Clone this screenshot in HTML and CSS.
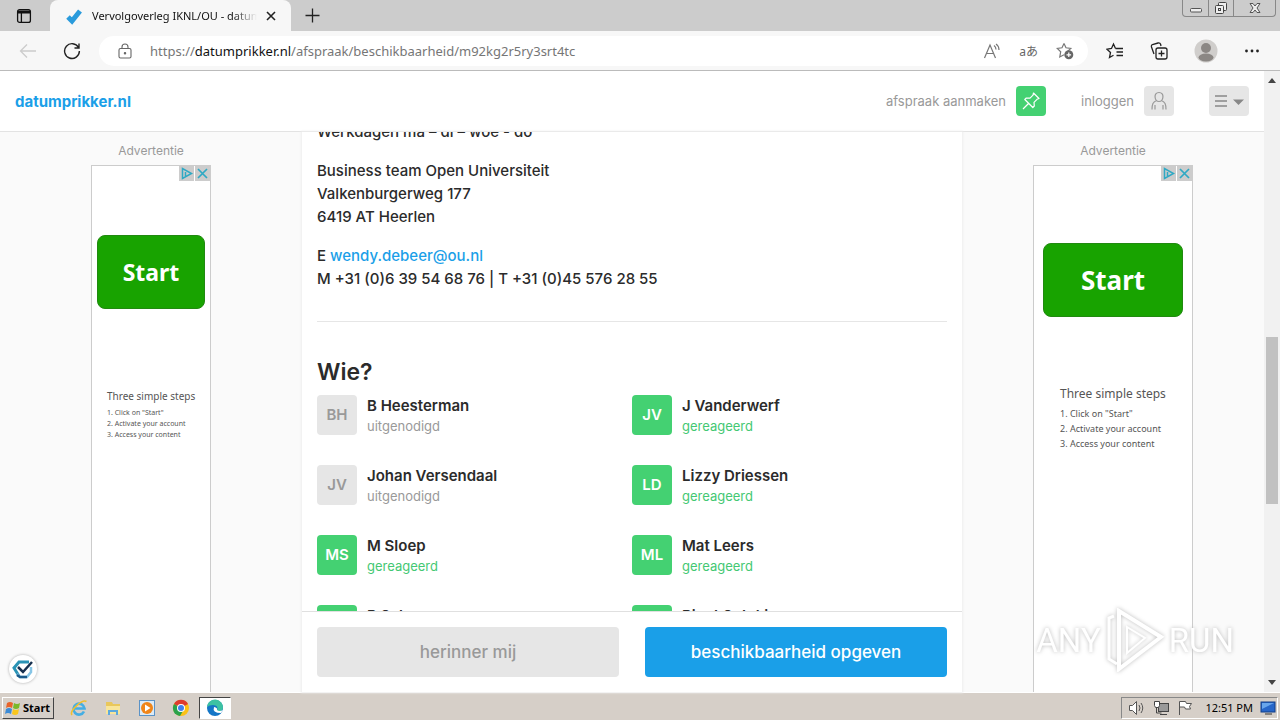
FILE: index.html
```
<!DOCTYPE html>
<html lang="nl">
    <head>
        <meta charset="utf-8">
        <title>Vervolgoverleg IKNL/OU - datumprikker.nl</title>
        <link rel="stylesheet" href="styles.css">
    </head>
    <body>
        <div class="tab-bar">
            <button class="tab-actions" aria-label="Tab actions">
                <svg width="16" height="16" viewBox="0 0 16 16" fill="none" stroke="#111" stroke-width="1.3"><rect x="1.6" y="1.6" width="12.8" height="12.8" rx="2"/><path d="M2 3.4h12M2 4.6h12" stroke-width="1.6"/><path d="M5.4 5v9"/></svg>
            </button>
            <div class="tab">
                <svg width="18" height="18" viewBox="0 0 18 18"><path d="M3 10l4 4L15 4" fill="none" stroke="#2a9bdc" stroke-width="5"/></svg>
                <span class="tab-title">Vervolgoverleg IKNL/OU - datumprikker.nl</span>
                <button class="tab-close" aria-label="Close tab">
                    <svg width="10" height="10" viewBox="0 0 10 10" stroke="#222" stroke-width="1.6"><path d="M1 1l8 8M9 1l-8 8"/></svg>
                </button>
            </div>
            <button class="new-tab" aria-label="New tab">
                <svg width="15" height="15" viewBox="0 0 15 15" stroke="#222" stroke-width="1.3"><path d="M7.5 .5v14M.5 7.5h14"/></svg>
            </button>
            <div class="window-btns">
                <button aria-label="Minimize"><svg width="14" height="14" viewBox="0 0 14 14" fill="#eee" stroke="#555"><rect x="1.5" y="7.5" width="11" height="3.5" rx="1"/></svg></button>
                <button aria-label="Restore"><svg width="14" height="14" viewBox="0 0 14 14" fill="#eee" stroke="#444"><rect x="4.5" y="1.5" width="8" height="8" rx="1"/><rect x="1.5" y="4.5" width="8" height="8" rx="1"/><rect x="4.5" y="7.5" width="2" height="2"/></svg></button>
                <button class="wide" aria-label="Close"><svg width="14" height="14" viewBox="0 0 14 14" fill="#eee" stroke="#555"><path d="M2 2.500h3l2 2.500 2-2.500h3L9 7l3 4.500H9L7 9l-2 2.500H2L5 7z"/></svg></button>
            </div>
        </div>

        <div class="toolbar">
            <button aria-label="Back"><svg width="18" height="16" viewBox="0 0 18 16" fill="none" stroke="#ccc" stroke-width="1.3"><path d="M17 8H2M8 1.500L1.500 8 8 14.500"/></svg></button>
            <button aria-label="Refresh"><svg width="18" height="18" viewBox="0 0 18 18" fill="none" stroke="#222" stroke-width="1.4"><path d="M15.500 5.500A7.400 7.400 0 1 0 16.400 9M16 1.500v4.500h-4.500"/></svg></button>
            <div class="address">
                <svg width="14" height="16" viewBox="0 0 14 16" fill="none" stroke="#666" stroke-width="1.1"><rect x="1" y="5.500" width="12" height="9.500" rx="1.500"/><path d="M4 5.500V4a3 3 0 0 1 6 0v1.500"/><circle cx="7" cy="10.200" r=".7" fill="#666"/></svg>
                <span class="url">https://<b>datumprikker.nl</b>/afspraak/beschikbaarheid/m92kg2r5ry3srt4tc</span>
                <button aria-label="Read aloud"><svg width="18" height="16" viewBox="0 0 18 16" fill="none" stroke="#777" stroke-width="1.200"><path d="M1.500 15L7 2l5.500 13M3.500 10.500h7M11 2.500q2 1.500 2 4M13 1q3 2 3 6"/></svg></button>
                <button class="translate" aria-label="Translate">aあ</button>
                <button aria-label="Add to favorites"><svg width="18" height="18" viewBox="0 0 18 18" fill="none" stroke="#777" stroke-width="1.200"><path d="M8 1.500l2 4.300 4.800.6-3.500 3.200M8 1.500L6 5.800l-4.800.6 3.500 3.300L3.800 15l4.200-2.300"/><circle cx="12.800" cy="12.800" r="4.500" fill="#666" stroke="none"/><path d="M12.800 10.500v4.600M10.500 12.800h4.600" stroke="#fff"/></svg></button>
            </div>
            <button aria-label="Favorites"><svg width="18" height="18" viewBox="0 0 18 18" fill="none" stroke="#222" stroke-width="1.300"><path d="M9.500 6.500L7.500 2 5.500 6.500 1 7.200l3.500 3.200L3.500 15.500l4-2.300M9.500 6.500H17M10.500 10H17M10.500 13.500H17"/></svg></button>
            <button aria-label="Collections"><svg width="18" height="18" viewBox="0 0 18 18" fill="none" stroke="#222" stroke-width="1.300"><rect x="6" y="6" width="11" height="11" rx="2"/><path d="M11.500 8.500v6M8.500 11.500h6M4 12L1.500 5q-.5-2 1-2.500L8 1q2-.4 2.600 1.300L11 4"/></svg></button>
            <button aria-label="Profile"><svg width="24" height="24" viewBox="0 0 24 24"><circle cx="12" cy="12" r="11.500" fill="#d0cecc"/><circle cx="12" cy="9" r="5" fill="#8b8784"/><ellipse cx="12" cy="18.500" rx="7.500" ry="4" fill="#8b8784"/></svg></button>
            <button aria-label="Settings and more"><svg width="16" height="16" viewBox="0 0 16 16" fill="#222"><circle cx="2.500" cy="8" r="1.400"/><circle cx="8" cy="8" r="1.400"/><circle cx="13.500" cy="8" r="1.400"/></svg></button>
        </div>

        <div class="viewport">
            <div class="site">
                <header class="site-header">
                    <a class="logo" href="#">datumprikker.nl</a>
                    <a class="nav-item" href="#">afspraak aanmaken
                        <span class="nav-icon green"><svg width="20" height="20" viewBox="0 0 20 20" fill="none" stroke="#fff" stroke-width="1.200" stroke-linejoin="round"><path d="M12.500 2l5.500 5.500-2 .8-3 3 .3 3.700-1.500 1.500-8-8L5.300 7 9 7.200l3-3zM7.500 12.500L2 18"/></svg></span>
                    </a>
                    <a class="nav-item login" href="#">inloggen
                        <span class="nav-icon"><svg width="20" height="20" viewBox="0 0 20 20" fill="none" stroke="#999" stroke-width="1.200"><path d="M10 1.500c6 0 4.500 9 0 9s-6-9 0-9zM7.500 9.500C4 11 3 13 3 18.500M12.500 9.500c3.500 1.500 4.500 3.500 4.500 9M6 14v4.500M14 14v4.500"/></svg></span>
                    </a>
                    <button class="menu-btn" aria-label="Menu"><svg width="30" height="16" viewBox="0 0 30 16"><path d="M1 3h12M1 8h12M1 13h12" stroke="#888" stroke-width="1.400"/><path d="M19 6.500h11L24.500 12z" fill="#888"/></svg></button>
                </header>

                <div class="columns">
                    <aside class="side">
                        <p class="side-label">Advertentie</p>
                        <div class="ad">
                            <div class="ad-choices">
                                <svg width="15" height="15" viewBox="0 0 15 15" fill="none" stroke="#2fa9c4" stroke-width="1.500"><path d="M3.500 2.500v10l9-5zM6.500 6v4"/></svg>
                                <svg width="15" height="15" viewBox="0 0 15 15" stroke="#2fa9c4" stroke-width="1.700"><path d="M3 3l9 9M12 3l-9 9"/></svg>
                            </div>
                            <button class="ad-start">Start</button>
                            <div class="ad-steps">
                                <h4>Three simple steps</h4>
                                <p>1. Click on "Start"</p>
                                <p>2. Activate your account</p>
                                <p>3. Access your content</p>
                            </div>
                        </div>
                    </aside>

                    <main class="card">
                        <div class="card-body">
                            <div class="card-scroll">
                                <p>Werkdagen ma – di – woe - do</p>
                                <p>Business team Open Universiteit<br>Valkenburgerweg 177<br>6419 AT Heerlen</p>
                                <p>E <a href="#">wendy.debeer@ou.nl</a><br>M +31 (0)6 39 54 68 76 | T +31 (0)45 576 28 55</p>
                                <hr>
                                <h2>Wie?</h2>
                                <ul class="people">
                                    <li><span class="avatar">BH</span><div><strong>B Heesterman</strong><small>uitgenodigd</small></div></li>
                                    <li class="done"><span class="avatar">JV</span><div><strong>J Vanderwerf</strong><small>gereageerd</small></div></li>
                                    <li><span class="avatar">JV</span><div><strong>Johan Versendaal</strong><small>uitgenodigd</small></div></li>
                                    <li class="done"><span class="avatar">LD</span><div><strong>Lizzy Driessen</strong><small>gereageerd</small></div></li>
                                    <li class="done"><span class="avatar">MS</span><div><strong>M Sloep</strong><small>gereageerd</small></div></li>
                                    <li class="done"><span class="avatar">ML</span><div><strong>Mat Leers</strong><small>gereageerd</small></div></li>
                                    <li class="done"><span class="avatar"></span><div><strong>P Sch</strong></div></li>
                                    <li class="done"><span class="avatar"></span><div><strong>Rient Sotaki</strong></div></li>
                                </ul>
                            </div>
                        </div>
                        <div class="card-footer">
                            <button class="btn">herinner mij</button>
                            <button class="btn primary">beschikbaarheid opgeven</button>
                        </div>
                    </main>

                    <aside class="side">
                        <p class="side-label">Advertentie</p>
                        <div class="ad large">
                            <div class="ad-choices">
                                <svg width="15" height="15" viewBox="0 0 15 15" fill="none" stroke="#2fa9c4" stroke-width="1.500"><path d="M3.500 2.500v10l9-5zM6.500 6v4"/></svg>
                                <svg width="15" height="15" viewBox="0 0 15 15" stroke="#2fa9c4" stroke-width="1.700"><path d="M3 3l9 9M12 3l-9 9"/></svg>
                            </div>
                            <button class="ad-start">Start</button>
                            <div class="ad-steps">
                                <h4>Three simple steps</h4>
                                <p>1. Click on "Start"</p>
                                <p>2. Activate your account</p>
                                <p>3. Access your content</p>
                            </div>
                        </div>
                    </aside>
                </div>

                <button class="consent" aria-label="Privacy">
                    <svg width="22" height="22" viewBox="0 0 22 22" fill="none"><path d="M17 4H7L2 10l5 8" stroke="#2a93b5" stroke-width="3"/><path d="M5 16l3 3h7l4-5V9" stroke="#86c5e6" stroke-width="2.500"/><path d="M5 17l3 2h7" stroke="#1b5a8a" stroke-width="2.500"/><path d="M6 9l5 5 9-10" stroke="#17304f" stroke-width="2.500"/></svg>
                </button>
            </div>
            <div class="scrollbar">
                <svg width="8" height="5" viewBox="0 0 8 5"><path d="M0 5l4-5 4 5z" fill="#444"/></svg>
                <div class="track"><div class="thumb"></div></div>
                <svg width="8" height="5" viewBox="0 0 8 5"><path d="M0 0l4 5 4-5z" fill="#444"/></svg>
            </div>
            <div class="watermark">
                <span>ANY</span>
                <svg width="60" height="64" viewBox="0 0 60 64" fill="none" stroke="#fff" stroke-width="4"><path d="M14 3l42 26-42 32z"/><path d="M22 19l18 11-18 15z" stroke-width="2"/><path d="M9 8l-5 2v41l8 5" stroke-width="3"/></svg>
                <span>RUN</span>
            </div>
        </div>

        <div class="taskbar">
            <button class="start">
                <svg width="16" height="16" viewBox="0 0 16 16"><path d="M2 3q3-2 6 0L7 8Q4 6 1 8z" fill="#e8632a"/><path d="M9 3q3 2 6 0l-1 5q-3 2-6 0z" fill="#7ab829"/><path d="M1 9q3-2 6 0l-1 5q-3-2-6 0z" fill="#3c8bd6"/><path d="M8 9q3 2 6 0l-1 5q-3 2-6 0z" fill="#f9c61d"/></svg>
                Start
            </button>
            <button class="task" aria-label="Internet Explorer"><svg width="18" height="18" viewBox="0 0 18 18" fill="none"><path d="M14 12.500A5.500 5.500 0 1 1 14.500 9.500H5" stroke="#45aee3" stroke-width="2.600"/><path d="M2 16C-1 12 12 0 16.500 2.500" stroke="#eebf2f" stroke-width="1.600"/></svg></button>
            <button class="task" aria-label="Explorer"><svg width="18" height="18" viewBox="0 0 18 18"><path d="M2 3h6l1 2h7v9H2z" fill="#e9c75b"/><path d="M2 7h14v8H2z" fill="#f8e59a"/><path d="M4 16v-5h10v5h-2v-3H6v3z" fill="#5da9dd"/></svg></button>
            <button class="task" aria-label="Media Player"><svg width="18" height="18" viewBox="0 0 18 18"><rect x="1.500" y="1.500" width="15" height="15" fill="#dcebf7" stroke="#5b93c7"/><circle cx="9" cy="9" r="6" fill="#f08519"/><path d="M7 5.500l5.500 3.500L7 12.500z" fill="#fff"/></svg></button>
            <button class="task" aria-label="Chrome"><svg width="18" height="18" viewBox="0 0 18 18"><circle cx="9" cy="9" r="8" fill="#fbc116"/><path d="M9 9L2 5a8 8 0 0 1 14 0z" fill="#de3b2f"/><path d="M9 9L2 5a8 8 0 0 0 6 12l3-5z" fill="#2ba24c"/><circle cx="9" cy="9" r="4" fill="#fff"/><circle cx="9" cy="9" r="3" fill="#4080ee"/></svg></button>
            <button class="task active" aria-label="Edge"><svg width="18" height="18" viewBox="0 0 18 18"><circle cx="9" cy="9" r="8" fill="#1476c6"/><path d="M1 8a8 8 0 0 1 16 1q-1 4-6 3 2-6-4-6-4 0-6 2z" fill="#3dc2a2"/><path d="M8 8q-2 6 7 6l2-3q-4 2-6 0 1-2-3-3z" fill="#fff"/></svg></button>
            <div class="tray">
                <svg width="18" height="16" viewBox="0 0 18 16" fill="#fff" stroke="#555"><path d="M1.500 5.500h3l4-4v13l-4-4h-3z"/><path d="M11 5q2 3 0 6M13 3q3.500 5 0 10" fill="none"/></svg>
                <svg width="17" height="16" viewBox="0 0 17 16" fill="#999" stroke="#444"><rect x="5.500" y="3.500" width="10" height="8"/><path d="M7 14.500h7M3.500 8v5h5" fill="none"/><path d="M1.500 1.500h5v4l-1 2h-3l-1-2z" fill="#fff"/></svg>
                <svg width="17" height="16" viewBox="0 0 17 16" fill="#fff" stroke="#555"><path d="M2.500 15V1.500h6l1 2h5l-2 3 1 2.500H8.500l-1-2h-5"/></svg>
                <span class="clock">12:51 PM</span>
                <svg width="16" height="14" viewBox="0 0 16 14"><rect x="1" y="1" width="14" height="10" fill="#2766c9" stroke="#123f87"/><path d="M2 2h12L2 8z" fill="#68a5eb"/><path d="M5 13h7" stroke="#333"/></svg>
            </div>
        </div>
    </body>
</html>
```
FILE: styles.css
```
* {
    box-sizing: border-box;
}
body {
    margin: 0;
    height: 100vh;
    display: flex;
    flex-direction: column;
    overflow: hidden;
    font-family: Inter, "Liberation Sans", sans-serif;
    font-size: 15px;
    color: #2b2b2b;
}
button {
    margin: 0;
    padding: 0;
    border: 0;
    background: none;
    font: inherit;
    color: inherit;
}
a {
    color: #1b9fe8;
    text-decoration: none;
}
svg {
    display: block;
    flex: none;
}

/* browser */
.tab-bar {
    display: flex;
    height: 31px;
    background: #ccc;
    font-family: "Noto Sans", sans-serif;
    font-size: 11px;
    color: #111;
}
.tab-actions {
    padding: 0 18px 0 16px;
}
.tab {
    display: flex;
    align-items: center;
    gap: 9px;
    width: 241px;
    padding: 0 15px;
    background: #f7f7f7;
    border-radius: 8px 8px 0 0;
}
.tab-title {
    flex: 1;
    overflow: hidden;
    white-space: nowrap;
    -webkit-mask-image: linear-gradient(to right, #000 85%, transparent);
}
.new-tab {
    padding: 0 14px;
}
.window-btns {
    display: flex;
    align-self: flex-start;
    height: 17px;
    margin: 0 4px 0 auto;
    border: 1px solid #888;
    border-top: 0;
    border-radius: 0 0 4px 4px;
}
.window-btns button {
    display: flex;
    align-items: center;
    justify-content: center;
    width: 25px;
}
.window-btns button + button {
    border-left: 1px solid #888;
}
.window-btns .wide {
    width: 42px;
}
.toolbar {
    display: flex;
    align-items: center;
    height: 40px;
    padding: 0 20px 0 19px;
    gap: 26px;
    background: #f7f7f7;
    border-bottom: 1px solid #bbb;
    font-family: "Noto Sans", "Noto Sans CJK JP", sans-serif;
}
.address {
    flex: 1;
    display: flex;
    align-items: center;
    gap: 18px;
    height: 30px;
    margin: 0 -8px;
    padding: 0 14px 0 19px;
    background: #fff;
    border-radius: 15px;
}
.url {
    flex: 1;
    font-size: 13px;
    color: #767676;
    white-space: nowrap;
}
.url b {
    font-weight: normal;
    color: #111;
}
.translate {
    font-size: 12px;
    color: #666;
}

/* page */
.viewport {
    position: relative;
    flex: 1;
    display: flex;
    min-height: 0;
}
.site {
    position: relative;
    flex: 1;
    display: flex;
    flex-direction: column;
    background: #fafafa;
}
.site-header {
    display: flex;
    align-items: center;
    height: 61px;
    padding: 0 15px;
    background: #fff;
    border-bottom: 1px solid #e3e3e3;
}
.logo {
    margin-right: auto;
    font-weight: bold;
}
.nav-item {
    display: flex;
    align-items: center;
    gap: 10px;
    font-size: 13px;
    color: #999;
}
.login {
    margin: 0 35px;
}
.nav-icon,
.menu-btn {
    display: flex;
    align-items: center;
    justify-content: center;
    width: 30px;
    height: 30px;
    background: #e6e6e6;
    border-radius: 4px;
}
.nav-icon.green {
    background: #44d172;
}
.menu-btn {
    width: 40px;
}
.columns {
    flex: 1;
    display: grid;
    grid-template-columns: 1fr 660px 1fr;
    grid-template-rows: 100%;
    min-height: 0;
}
.side {
    display: flex;
    flex-direction: column;
    align-items: center;
}
.side-label {
    margin: 0;
    padding: 9px 0 4px;
    font-size: 12px;
    line-height: 20px;
    color: #999;
}
.ad {
    flex: 1;
    display: flex;
    flex-direction: column;
    width: 120px;
    background: #fff;
    border: 1px solid #ccc;
    border-width: 1px 1px 0;
    font-family: "Noto Sans", sans-serif;
    color: #555;
}
.ad-choices {
    display: flex;
    justify-content: flex-end;
    gap: 1px;
}
.ad-choices svg {
    background: #ccc;
}
.ad-start {
    height: 74px;
    margin: 54px 5px 80px;
    background: #18a300;
    border: 1px solid #218a10;
    border-radius: 8px;
    font-size: 23px;
    font-weight: bold;
    color: #fff;
}
.ad-steps {
    padding-left: 15px;
    font-size: 7px;
    line-height: 11px;
    white-space: nowrap;
}
.ad-steps h4 {
    margin: 0 0 4px;
    font-size: 10px;
    font-weight: normal;
    line-height: 14px;
}
.ad-steps p {
    margin: 0;
}
.ad.large {
    width: 160px;
}
.large .ad-start {
    margin: 62px 9px 69px;
    font-size: 26px;
}
.large .ad-steps {
    padding-left: 26px;
    font-size: 9px;
    line-height: 15px;
}
.large .ad-steps h4 {
    font-size: 12px;
    line-height: 16px;
}
.card {
    display: flex;
    flex-direction: column;
    background: #fff;
    box-shadow: 0 0 2px 1px #eee;
}
.card-body {
    flex: 1;
    min-height: 0;
    overflow: hidden;
}
.card-scroll {
    margin-top: -12px;
    padding: 0 15px;
    line-height: 23px;
}
.card-scroll p {
    margin: 0 0 16px;
    font-weight: 500;
}
.card-scroll hr {
    margin: 31px 0 35px;
    border: 0;
    border-top: 1px solid #e6e6e6;
}
.card-scroll h2 {
    margin: 0 0 8px;
    font-size: 23px;
    font-weight: 600;
    line-height: 30px;
}
.people {
    display: grid;
    grid-template-columns: 1fr 1fr;
    row-gap: 30px;
    margin: 0;
    padding: 0;
    list-style: none;
}
.people li {
    display: flex;
    gap: 10px;
    height: 40px;
    line-height: 20px;
}
.avatar {
    width: 40px;
    background: #e6e6e6;
    border-radius: 4px;
    line-height: 40px;
    text-align: center;
    font-weight: 600;
    color: #999;
}
.people strong {
    display: block;
    font-weight: 600;
    line-height: 21px;
}
.people small {
    display: block;
    font-size: 13px;
    color: #999;
}
.done .avatar {
    background: #44d172;
    color: #fff;
}
.people .done small {
    color: #44c873;
}
.card-footer {
    display: grid;
    grid-template-columns: 1fr 1fr;
    gap: 26px;
    padding: 15px;
    border-top: 1px solid #e0e0e0;
}
.btn {
    height: 50px;
    background: #e6e6e6;
    border-radius: 4px;
    font-size: 17px;
    font-weight: 500;
    color: #999;
}
.btn.primary {
    background: #1a9fe8;
    color: #fff;
}
.consent {
    position: absolute;
    left: 9px;
    bottom: 9px;
    padding: 3px;
    background: #fff;
    border-radius: 50%;
    box-shadow: 0 0 3px #aaa;
}
.scrollbar {
    display: flex;
    flex-direction: column;
    align-items: center;
    width: 16px;
    padding: 7px 0;
    background: #f1f1f1;
}
.track {
    flex: 1;
    padding-top: 254px;
}
.thumb {
    width: 12px;
    height: 167px;
    background: #c1c1c1;
}
.watermark {
    position: absolute;
    right: 46px;
    bottom: 20px;
    display: flex;
    align-items: center;
    gap: 4px;
    font-family: "Liberation Sans Narrow", Roboto, sans-serif;
    font-size: 33px;
    color: #fff;
    filter: drop-shadow(0 0 2px #bbb);
}

/* taskbar */
.taskbar {
    display: flex;
    align-items: center;
    height: 28px;
    padding: 2px 2px 0;
    background: #d6cfc8;
    border-top: 1px solid #fff;
    font-family: "Noto Sans", sans-serif;
    font-size: 11px;
    color: #000;
}
.start {
    display: flex;
    align-items: center;
    gap: 2px;
    height: 22px;
    margin-right: 9px;
    padding: 0 3px 0 2px;
    border: 1px solid;
    border-color: #fff #444 #444 #fff;
    font-weight: bold;
}
.task {
    display: flex;
    align-items: center;
    justify-content: center;
    width: 32px;
    height: 22px;
    margin-right: 2px;
}
.task.active {
    background: #fff;
    border: 1px solid;
    border-color: #444 #fff #fff #444;
}
.tray {
    display: flex;
    align-items: center;
    gap: 7px;
    height: 22px;
    margin-left: auto;
    padding: 0 1px 0 6px;
    border: 1px solid;
    border-color: #888 #fff #fff #888;
}
.clock {
    margin-left: 4px;
}
```
